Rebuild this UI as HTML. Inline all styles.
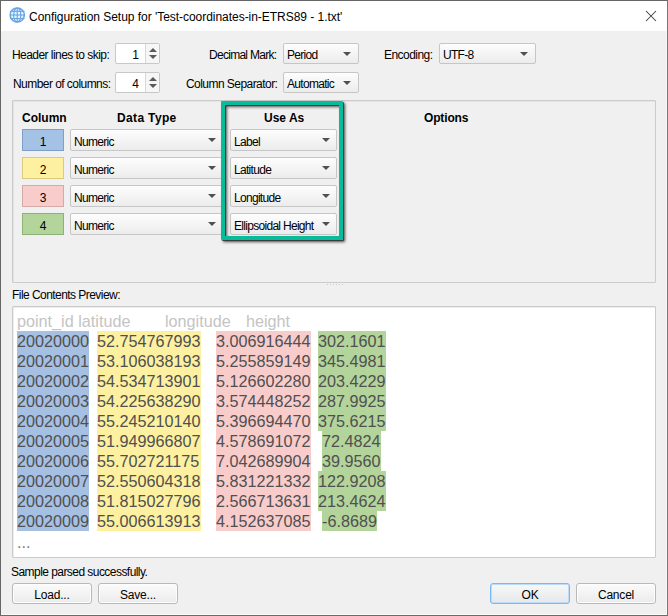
<!DOCTYPE html>
<html><head><meta charset="utf-8">
<style>
html,body{margin:0;padding:0;}
body{width:668px;height:616px;overflow:hidden;position:relative;background:#f0f0f0;font-family:"Liberation Sans",sans-serif;font-size:12px;color:#000;}
.a{position:absolute;}
.win{position:absolute;left:0;top:0;width:666px;height:614px;border:1px solid #666;border-right-color:#7a7676;border-bottom-color:#6e6a6a;background:#f0f0f0;box-shadow:inset -1px -1px 0 #f9f9f9;}
.title{position:absolute;left:0;top:0;width:668px;height:31px;background:#fff;}
.lbl{position:absolute;white-space:pre;font-size:12px;line-height:14px;letter-spacing:-0.55px;color:#000;}
.b{font-weight:bold;letter-spacing:0;}
.combo{position:absolute;box-sizing:border-box;border:1px solid #c6c6c6;border-radius:2px;background:linear-gradient(#fdfdfd,#ececec);}
.combo span{position:absolute;left:3px;top:4px;white-space:pre;line-height:14px;letter-spacing:-0.7px;}
.combo.h22 span{top:5px;}
.combo.ua i{right:6px;}
.combo i{position:absolute;right:7px;top:8px;width:0;height:0;border-left:4px solid transparent;border-right:4px solid transparent;border-top:4px solid #505050;}
.spin{position:absolute;box-sizing:border-box;border:1px solid #c8c8c8;border-radius:2px;background:#fff;}
.btn{position:absolute;box-sizing:border-box;border:1px solid #b9b9b9;border-radius:3px;background:linear-gradient(#fbfbfb,#ebebeb);box-shadow:inset 0 0 0 1px #fdfdfd;text-align:center;line-height:22px;letter-spacing:-0.2px;}
.cbox{position:absolute;left:22px;width:42px;height:22px;box-sizing:border-box;text-align:center;line-height:24px;font-size:12px;}
.sh{position:relative;top:0px;}
.pv{position:absolute;font-size:16.2px;line-height:20px;white-space:pre;color:#505050;}
</style></head><body>
<div class="win"></div>
<div class="a" style="left:1px;top:1px;width:666px;height:30px;background:#fff;"></div>
<!-- globe icon -->
<svg class="a" style="left:9px;top:7px" width="17" height="17" viewBox="0 0 17 17">
<circle cx="8.25" cy="8" r="7.1" fill="#eaf3fc" stroke="#64a5e6" stroke-width="1.5"/>
<g stroke="#64a5e6" stroke-width="1.1" fill="none">
<ellipse cx="8.25" cy="8" rx="3.6" ry="7"/>
<line x1="8.25" y1="1" x2="8.25" y2="15"/>
<line x1="1" y1="4.3" x2="15.5" y2="4.3"/>
<line x1="1" y1="8" x2="15.5" y2="8"/>
<line x1="1" y1="11.6" x2="15.5" y2="11.6"/>
</g>
</svg>
<div class="lbl" style="left:29px;top:10px;letter-spacing:-0.035px;color:#000;">Configuration Setup for 'Test-coordinates-in-ETRS89 - 1.txt'</div>
<svg class="a" style="left:645px;top:10px" width="12" height="12" viewBox="0 0 12 12"><path d="M1 1L11 11M11 1L1 11" stroke="#3c3c3c" stroke-width="1.05"/></svg>

<!-- top form -->
<div class="lbl" style="left:12px;top:48px;">Header lines to skip:</div>
<div class="spin" style="left:115px;top:43px;width:45px;height:21px;"><span style="position:absolute;right:20px;top:4px;line-height:14px;">1</span><div style="position:absolute;left:29px;top:0;width:1px;height:19px;background:#d8d8d8"></div><div style="position:absolute;left:30px;top:0;width:13px;height:19px;background:#f6f6f6;border-radius:0 2px 2px 0"></div><i style="position:absolute;left:33px;top:4px;border-left:4px solid transparent;border-right:4px solid transparent;border-bottom:4px solid #5a5a5a"></i><i style="position:absolute;left:33px;top:11px;border-left:4px solid transparent;border-right:4px solid transparent;border-top:4px solid #5a5a5a"></i></div>
<div class="lbl" style="left:13px;top:77px;">Number of columns:</div>
<div class="spin" style="left:115px;top:72px;width:45px;height:21px;"><span style="position:absolute;right:20px;top:4px;line-height:14px;">4</span><div style="position:absolute;left:29px;top:0;width:1px;height:19px;background:#d8d8d8"></div><div style="position:absolute;left:30px;top:0;width:13px;height:19px;background:#f6f6f6;border-radius:0 2px 2px 0"></div><i style="position:absolute;left:33px;top:4px;border-left:4px solid transparent;border-right:4px solid transparent;border-bottom:4px solid #5a5a5a"></i><i style="position:absolute;left:33px;top:11px;border-left:4px solid transparent;border-right:4px solid transparent;border-top:4px solid #5a5a5a"></i></div>

<div class="lbl" style="left:209px;top:48px;letter-spacing:-0.72px;">Decimal Mark:</div>
<div class="combo" style="left:283px;top:43px;width:76px;height:21px;"><span>Period</span><i></i></div>
<div class="lbl" style="left:186px;top:77px;">Column Separator:</div>
<div class="combo" style="left:283px;top:72px;width:76px;height:21px;"><span>Automatic</span><i></i></div>
<div class="lbl" style="left:384px;top:48px;">Encoding:</div>
<div class="combo" style="left:439px;top:43px;width:97px;height:21px;"><span>UTF-8</span><i></i></div>

<!-- group box -->
<div class="a" style="left:12px;top:100px;width:642px;height:181px;border:1px solid #cbcbcb;border-radius:1px;box-shadow:inset 1px 1px 0 #e4e4e4;"></div>
<div class="lbl b" style="left:22px;top:111px;">Column</div>
<div class="lbl b" style="left:117px;top:111px;letter-spacing:0.35px;">Data Type</div>
<div class="lbl b" style="left:264px;top:111px;">Use As</div>
<div class="lbl b" style="left:424px;top:111px;letter-spacing:-0.15px;">Options</div>

<div class="cbox" style="top:129px;background:#a4c1e6;border:1px solid #7f9fc8;">1</div>
<div class="cbox" style="top:157px;background:#fdf0a0;border:1px solid #d9cc82;">2</div>
<div class="cbox" style="top:185px;background:#f9cccc;border:1px solid #d6a9a9;">3</div>
<div class="cbox" style="top:213px;background:#b3d49a;border:1px solid #8db273;">4</div>

<div class="combo h22" style="left:70px;top:129px;width:154px;height:22px;"><span>Numeric</span><i></i></div>
<div class="combo h22" style="left:70px;top:157px;width:154px;height:22px;"><span>Numeric</span><i></i></div>
<div class="combo h22" style="left:70px;top:185px;width:154px;height:22px;"><span>Numeric</span><i></i></div>
<div class="combo h22" style="left:70px;top:213px;width:154px;height:22px;"><span>Numeric</span><i></i></div>

<div class="combo h22 ua" style="left:230px;top:129px;width:107px;height:22px;"><span>Label</span><i></i></div>
<div class="combo h22 ua" style="left:230px;top:157px;width:107px;height:22px;"><span>Latitude</span><i></i></div>
<div class="combo h22 ua" style="left:230px;top:185px;width:107px;height:22px;"><span>Longitude</span><i></i></div>
<div class="combo h22 ua" style="left:230px;top:213px;width:107px;height:22px;"><span>Ellipsoidal Height</span><i></i></div>

<!-- teal highlight -->
<div class="a" style="left:221px;top:101px;width:114px;height:131px;border:4px solid #08bb9b;border-radius:1px;box-shadow:1px 1px 0 rgba(50,50,50,0.8), 2px 2px 3px rgba(0,0,0,0.7), inset 1px 1px 0 rgba(50,50,50,0.85), inset 2px 2px 3px rgba(0,0,0,0.65);"></div>

<!-- splitter dots -->
<div class="a" style="left:327px;top:284px;width:17px;height:1px;background:repeating-linear-gradient(90deg,#c8c8c8 0 1px,transparent 1px 3px);"></div>

<div class="lbl" style="left:12px;top:288px;">File Contents Preview:</div>
<div class="a" style="left:12px;top:306px;width:642px;height:250px;border:1px solid #cbcbcb;border-radius:1px;background:#fff;box-shadow:inset 1px 1px 0 #ececec;"></div>

<div class="pv" style="left:17px;top:311px;color:#c4c4c4;"><span class="sh">point_id latitude</span></div>
<div class="pv" style="left:165px;top:311px;color:#c4c4c4;"><span class="sh">longitude</span></div>
<div class="pv" style="left:246px;top:311px;color:#c4c4c4;"><span class="sh">height</span></div>

<div class="pv" style="left:17px;top:331px;background:#a6c0e4;"><span class="sh">20020000
20020001
20020002
20020003
20020004
20020005
20020006
20020007
20020008
20020009</span></div>
<div class="pv" style="left:97px;top:331px;background:#fdf0a0;"><span class="sh">52.754767993
53.106038193
54.534713901
54.225638290
55.245210140
51.949966807
55.702721175
52.550604318
51.815027796
55.006613913</span></div>
<div class="pv" style="left:216px;top:331px;background:#f9cccc;"><span class="sh">3.006916444
5.255859149
5.126602280
3.574448252
5.396694470
4.578691072
7.042689904
5.831221332
2.566713631
4.152637085</span></div>
<div class="a" style="left:318px;top:331px;">
<div class="pv" style="position:static;display:table;background:#b3d49a;"><span class="sh">302.1601</span></div>
<div class="pv" style="position:static;display:table;background:#b3d49a;"><span class="sh">345.4981</span></div>
<div class="pv" style="position:static;display:table;background:#b3d49a;"><span class="sh">203.4229</span></div>
<div class="pv" style="position:static;display:table;background:#b3d49a;"><span class="sh">287.9925</span></div>
<div class="pv" style="position:static;display:table;background:#b3d49a;"><span class="sh">375.6215</span></div>
<div class="pv" style="position:static;display:table;background:#b3d49a;margin-left:4px;"><span class="sh">72.4824</span></div>
<div class="pv" style="position:static;display:table;background:#b3d49a;margin-left:4px;"><span class="sh">39.9560</span></div>
<div class="pv" style="position:static;display:table;background:#b3d49a;"><span class="sh">122.9208</span></div>
<div class="pv" style="position:static;display:table;background:#b3d49a;"><span class="sh">213.4624</span></div>
<div class="pv" style="position:static;display:table;background:#b3d49a;margin-left:4px;"><span class="sh">-6.8689</span></div>
</div>
<div class="pv" style="left:17px;top:532px;color:#7a7a7a;"><span class="sh">...</span></div>

<div class="lbl" style="left:11px;top:565px;">Sample parsed successfully.</div>
<div class="btn" style="left:12px;top:583px;width:80px;height:21px;">Load...</div>
<div class="btn" style="left:98px;top:583px;width:80px;height:21px;">Save...</div>
<div class="btn" style="left:490px;top:583px;width:80px;height:21px;border-color:#78baf4;background:linear-gradient(#f7f8f9,#e5e8eb);box-shadow:inset 0 0 0 1px #bcdcf8;">OK</div>
<div class="btn" style="left:576px;top:583px;width:80px;height:21px;">Cancel</div>
</body></html>
